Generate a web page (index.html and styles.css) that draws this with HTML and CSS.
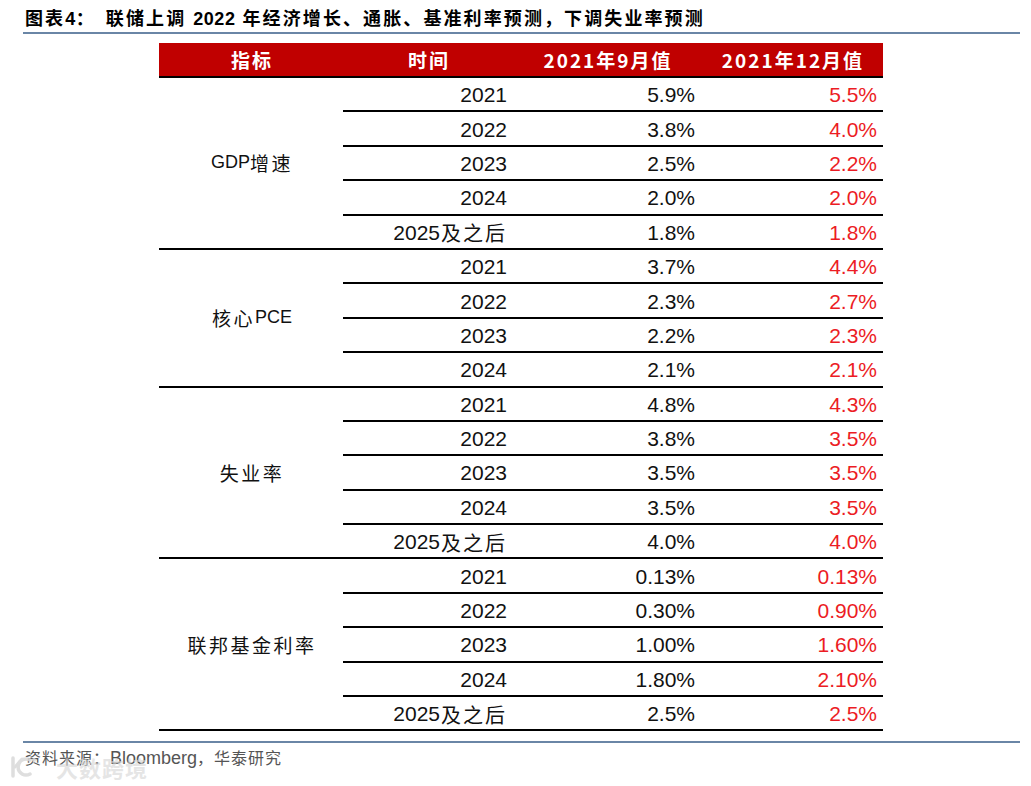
FILE: index.html
```html
<!DOCTYPE html>
<html lang="zh-CN">
<head>
<meta charset="utf-8">
<title>图表4</title>
<link rel="stylesheet" href="styles.css">
</head>
<body>
<div class="page">
  <div class="title"><span>图表<b class="num">4</b>：</span><span class="title-main">联储上调 <b class="num">2022</b> 年经济增长、通胀、基准利率预测，下调失业率预测</span></div>

  <div class="table">
    <div class="thead">
      <div class="th">指标</div>
      <div class="th">时间</div>
      <div class="th">2021年9月值</div>
      <div class="th">2021年12月值</div>
    </div>

    <div class="group">
      <div class="label"><span class="lat">GDP</span>增速</div>
      <div class="rows">
        <div class="row"><div class="yr">2021</div><div class="v">5.9%</div><div class="v red">5.5%</div></div>
        <div class="row"><div class="yr">2022</div><div class="v">3.8%</div><div class="v red">4.0%</div></div>
        <div class="row"><div class="yr">2023</div><div class="v">2.5%</div><div class="v red">2.2%</div></div>
        <div class="row"><div class="yr">2024</div><div class="v">2.0%</div><div class="v red">2.0%</div></div>
        <div class="row"><div class="yr">2025<span class="cjk">及之后</span></div><div class="v">1.8%</div><div class="v red">1.8%</div></div>
      </div>
    </div>

    <div class="group">
      <div class="label">核心<span class="lat">PCE</span></div>
      <div class="rows">
        <div class="row"><div class="yr">2021</div><div class="v">3.7%</div><div class="v red">4.4%</div></div>
        <div class="row"><div class="yr">2022</div><div class="v">2.3%</div><div class="v red">2.7%</div></div>
        <div class="row"><div class="yr">2023</div><div class="v">2.2%</div><div class="v red">2.3%</div></div>
        <div class="row"><div class="yr">2024</div><div class="v">2.1%</div><div class="v red">2.1%</div></div>
      </div>
    </div>

    <div class="group">
      <div class="label">失业率</div>
      <div class="rows">
        <div class="row"><div class="yr">2021</div><div class="v">4.8%</div><div class="v red">4.3%</div></div>
        <div class="row"><div class="yr">2022</div><div class="v">3.8%</div><div class="v red">3.5%</div></div>
        <div class="row"><div class="yr">2023</div><div class="v">3.5%</div><div class="v red">3.5%</div></div>
        <div class="row"><div class="yr">2024</div><div class="v">3.5%</div><div class="v red">3.5%</div></div>
        <div class="row"><div class="yr">2025<span class="cjk">及之后</span></div><div class="v">4.0%</div><div class="v red">4.0%</div></div>
      </div>
    </div>

    <div class="group">
      <div class="label">联邦基金利率</div>
      <div class="rows">
        <div class="row"><div class="yr">2021</div><div class="v">0.13%</div><div class="v red">0.13%</div></div>
        <div class="row"><div class="yr">2022</div><div class="v">0.30%</div><div class="v red">0.90%</div></div>
        <div class="row"><div class="yr">2023</div><div class="v">1.00%</div><div class="v red">1.60%</div></div>
        <div class="row"><div class="yr">2024</div><div class="v">1.80%</div><div class="v red">2.10%</div></div>
        <div class="row"><div class="yr">2025<span class="cjk">及之后</span></div><div class="v">2.5%</div><div class="v red">2.5%</div></div>
      </div>
    </div>
  </div>

  <div class="source">资料来源：<span class="lat-src">Bloomberg</span>，华泰研究</div>

  <div class="watermark">
    <svg class="wm-logo" width="30" height="26" viewBox="0 0 30 26">
      <path d="M5 4 L5 22" stroke="#d9d9d9" stroke-width="3.5" fill="none" stroke-linecap="round"/>
      <path d="M7 13 L14 5" stroke="#d9d9d9" stroke-width="3" fill="none" stroke-linecap="round"/>
      <path d="M22 6 A8 8 0 1 0 22 20" stroke="#d9d9d9" stroke-width="3.5" fill="none" stroke-linecap="round"/>
      <circle cx="26" cy="6" r="2" fill="#d9d9d9"/>
    </svg>
    <span class="wm-text">大数跨境</span>
  </div>
</div>
</body>
</html>
```

FILE: styles.css
```css
html, body {
  margin: 0;
  padding: 0;
  background: #ffffff;
}

.page {
  position: relative;
  width: 1031px;
  height: 786px;
  font-family: "Liberation Sans", "Noto Sans CJK SC", sans-serif;
  color: #000;
}

.title {
  margin-left: 23px;
  width: 997px;
  height: 34px;
  box-sizing: border-box;
  padding-left: 2px;
  padding-top: 8px;
  border-bottom: 2px solid #6a86a6;
  font-family: "Liberation Sans", "Noto Sans CJK SC", sans-serif;
  font-weight: 700;
  font-size: 18px;
  line-height: 22px;
  letter-spacing: 2.1px;
  white-space: nowrap;
}

.title .num {
  font-weight: 700;
  letter-spacing: 0.5px;
}

.title-main {
  margin-left: 10px;
}

.table {
  margin-left: 159px;
  margin-top: 9px;
  width: 724px;
}

.thead {
  display: grid;
  grid-template-columns: 184px 170px 188px 182px;
  height: 35px;
  box-sizing: border-box;
  background: #c00000;
  border-bottom: 2px solid #000;
}

.th {
  display: flex;
  align-items: center;
  justify-content: center;
  color: #fff;
  font-family: "Noto Sans CJK SC", sans-serif;
  font-weight: 700;
  font-size: 19px;
  letter-spacing: 2px;
  padding-left: 2px;
}

.group {
  display: flex;
}

.label {
  width: 184px;
  flex: none;
  display: flex;
  align-items: center;
  justify-content: center;
  box-sizing: border-box;
  border-bottom: 2px solid #000;
  font-family: "Noto Sans CJK SC", sans-serif;
  font-size: 19px;
  letter-spacing: 2.5px;
  color: #111;
  padding-left: 2px;
}

.label .lat {
  font-family: "Liberation Sans", sans-serif;
  font-size: 18px;
  letter-spacing: 0;
}

.rows {
  flex: 1;
  display: flex;
  flex-direction: column;
}

.row {
  display: grid;
  grid-template-columns: 170px 188px 182px;
  height: 34.4px;
  box-sizing: border-box;
  border-bottom: 2px solid #000;
  font-size: 21px;
}

.yr, .v {
  display: flex;
  align-items: center;
  justify-content: flex-end;
  padding-right: 6px;
  padding-top: 2px;
  color: #111;
}

.red {
  color: #ec1c24;
}

.cjk {
  font-family: "Noto Sans CJK SC", sans-serif;
  font-size: 20px;
  letter-spacing: 2px;
  margin-left: 1px;
}

.source {
  margin-left: 23px;
  margin-top: 10px;
  width: 997px;
  box-sizing: border-box;
  border-top: 2px solid #6a86a6;
  padding-left: 2px;
  padding-top: 4px;
  font-family: "Noto Sans CJK SC", sans-serif;
  font-size: 16px;
  line-height: 20px;
  letter-spacing: 1px;
  color: #555;
}

.lat-src {
  font-family: "Liberation Sans", sans-serif;
  font-size: 18px;
  letter-spacing: 0;
}

.watermark {
  position: absolute;
  left: 8px;
  top: 754px;
  display: flex;
  align-items: center;
  gap: 6px;
  opacity: 0.85;
}

.wm-text {
  font-family: "Noto Sans CJK SC", sans-serif;
  font-weight: 700;
  font-size: 22px;
  line-height: 26px;
  letter-spacing: 1px;
  color: rgba(215, 215, 215, 0.75);
  margin-left: 12px;
}
```
